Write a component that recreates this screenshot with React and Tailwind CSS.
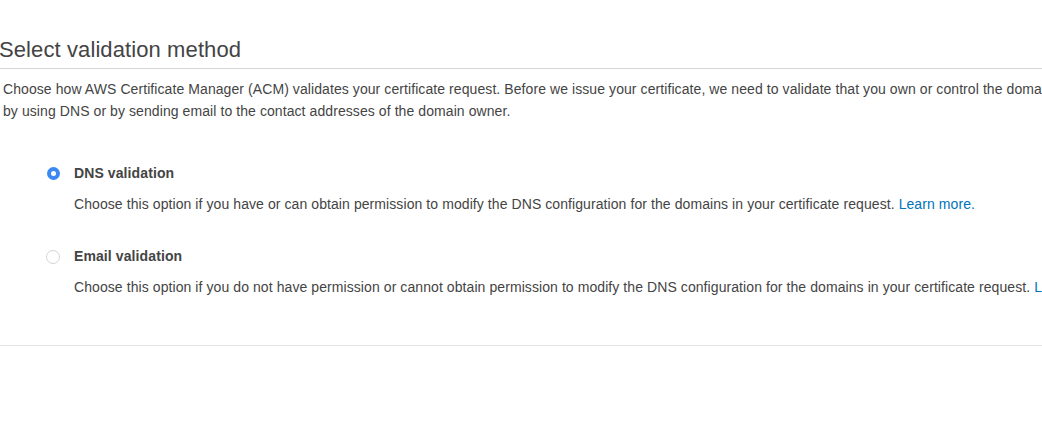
const font = { fontFamily: '"Liberation Sans", Arial, Helvetica, sans-serif' }

function Radio({ checked }) {
  if (checked) {
    return (
      <span className="w-[13px] h-[13px] rounded-full bg-[#3b88f5] flex items-center justify-center shrink-0">
        <span className="w-[5px] h-[5px] rounded-full bg-white" />
      </span>
    )
  }
  return <span className="w-[14px] h-[14px] rounded-full border border-[#d4d4d4] bg-white shrink-0" />
}

function Option({ checked, title, text }) {
  return (
    <div className="flex flex-col">
      <div className="flex items-center h-[22px]">
        <div className="w-[74px] flex justify-end pr-[14px] pt-px">
          <Radio checked={checked} />
        </div>
        <span className="font-bold text-[14px] tracking-[0.1px] text-[#444]">{title}</span>
      </div>
      <div className="pl-[74px] mt-[9px] text-[14px] tracking-[0.08px] leading-[22px] text-[#444] whitespace-nowrap">
        {text} <a className="text-[#0073bb]" href="#">Learn more.</a>
      </div>
    </div>
  )
}

export default function App() {
  return (
    <div className="w-[1042px] h-[432px] bg-white overflow-hidden" style={font}>
      <div className="pt-[37px] border-b border-[#e4e4e4]">
        <h2 className="text-[22px] leading-[26px] tracking-[0.1px] text-[#444] pb-[5px] border-b border-[#d5d5d5] -ml-px font-normal whitespace-nowrap">
          Select validation method
        </h2>
        <p className="pl-[3px] mt-[9px] text-[14px] tracking-[0.08px] leading-[22px] text-[#444] whitespace-nowrap overflow-hidden">
          Choose how AWS Certificate Manager (ACM) validates your certificate request. Before we issue your certificate, we need to validate that you own or control the domains in your certificate request. You can validate
          <br />
          by using DNS or by sending email to the contact addresses of the domain owner.
        </p>
        <div className="mt-[40px] flex flex-col gap-[30px] pb-[47px]">
          <Option
            checked
            title="DNS validation"
            text="Choose this option if you have or can obtain permission to modify the DNS configuration for the domains in your certificate request."
          />
          <Option
            title="Email validation"
            text="Choose this option if you do not have permission or cannot obtain permission to modify the DNS configuration for the domains in your certificate request."
          />
        </div>
      </div>
    </div>
  )
}
